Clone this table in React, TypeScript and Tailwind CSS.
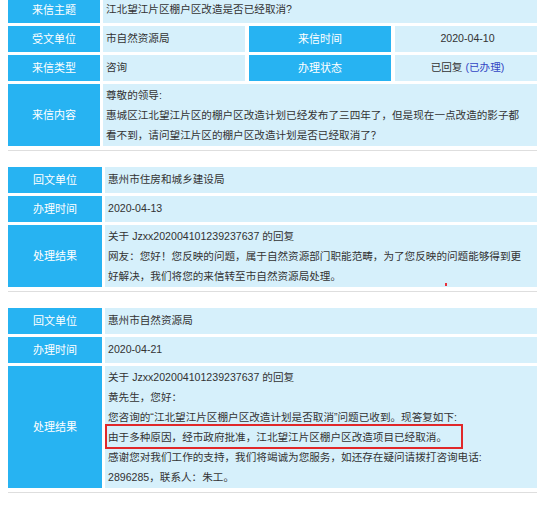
import type { ReactNode } from 'react';

function Label({ children, className = '' }: { children: ReactNode; className?: string }) {
    return (
        <div className={`flex shrink-0 items-center justify-center bg-[#27b3f2] text-[11px] text-white ${className}`}>
            {children}
        </div>
    );
}

function Cell({ children, className = '' }: { children: ReactNode; className?: string }) {
    return <div className={`bg-[#d6f0fb] pl-[3px] text-[#333] ${className}`}>{children}</div>;
}

function Line({ children }: { children: ReactNode }) {
    return <div className="h-[20px] whitespace-nowrap leading-[20px]">{children}</div>;
}

function ReplySection({
    unit,
    date,
    children,
}: {
    unit: string;
    date: string;
    children: ReactNode;
}) {
    return (
        <section className="mt-[16px] flex flex-col gap-[3px] border-b border-[#dedede] pb-[4px]">
            <div className="flex h-[26px]">
                <Label className="w-[94px]">回文单位</Label>
                <Cell className="ml-[3px] flex flex-1 items-center">{unit}</Cell>
            </div>
            <div className="flex h-[26px]">
                <Label className="w-[94px]">办理时间</Label>
                <Cell className="ml-[3px] flex flex-1 items-center">{date}</Cell>
            </div>
            <div className="flex">
                <Label className="w-[94px]">处理结果</Label>
                <Cell className="relative ml-[3px] flex-1 pt-px pb-px">{children}</Cell>
            </div>
        </section>
    );
}

export default function App() {
    return (
        <div className="min-h-[505px] w-[550px] overflow-hidden bg-white font-['Liberation_Sans','Noto_Sans_CJK_SC',sans-serif] text-[10.6px]">
            <div className="ml-[8px] w-[529px]">
                {/* 来信 */}
                <section className="-mt-[3px] flex flex-col gap-[3px] border-b border-[#dedede] pb-[4px]">
                    <div className="flex h-[26px]">
                        <Label className="w-[92px]">来信主题</Label>
                        <Cell className="ml-[3px] flex flex-1 items-center">江北望江片区棚户区改造是否已经取消?</Cell>
                    </div>
                    <div className="flex h-[26px]">
                        <Label className="w-[92px]">受文单位</Label>
                        <Cell className="ml-[3px] flex w-[142px] items-center">市自然资源局</Cell>
                        <Label className="ml-[4px] w-[142px]">来信时间</Label>
                        <Cell className="ml-[4px] flex flex-1 items-center justify-center pl-0">2020-04-10</Cell>
                    </div>
                    <div className="flex h-[26px]">
                        <Label className="w-[92px]">来信类型</Label>
                        <Cell className="ml-[3px] flex w-[142px] items-center">咨询</Cell>
                        <Label className="ml-[4px] w-[142px]">办理状态</Label>
                        <Cell className="ml-[4px] flex flex-1 items-center justify-center gap-[3px] pl-0">
                            <span>已回复</span>
                            <span className="text-[#3346c4]">(已办理)</span>
                        </Cell>
                    </div>
                    <div className="flex">
                        <Label className="w-[92px]">来信内容</Label>
                        <Cell className="ml-[3px] flex-1 py-px">
                            <Line>尊敬的领导:</Line>
                            <Line>惠城区江北望江片区的棚户区改造计划已经发布了三四年了，但是现在一点改造的影子都</Line>
                            <Line>看不到，请问望江片区的棚户区改造计划是否已经取消了？</Line>
                        </Cell>
                    </div>
                </section>

                <ReplySection unit="惠州市住房和城乡建设局" date="2020-04-13">
                    <Line>关于 Jzxx202004101239237637 的回复</Line>
                    <Line>网友：您好！您反映的问题，属于自然资源部门职能范畴，为了您反映的问题能够得到更</Line>
                    <Line>好解决，我们将您的来信转至市自然资源局处理。</Line>
                    <span className="absolute top-[58px] left-[340px] h-[3px] w-[2px] bg-[#e8303a]" />
                </ReplySection>

                <ReplySection unit="惠州市自然资源局" date="2020-04-21">
                    <Line>关于 Jzxx202004101239237637 的回复</Line>
                    <Line>黄先生，您好：</Line>
                    <Line>您咨询的“江北望江片区棚户区改造计划是否取消”问题已收到。现答复如下:</Line>
                    <div className="relative h-[20px] whitespace-nowrap leading-[20px]">
                        由于多种原因，经市政府批准，江北望江片区棚户区改造项目已经取消。
                        <span className="absolute -top-[3px] -left-[3px] h-[25px] w-[358px] border-2 border-[#e0282a]" />
                    </div>
                    <Line>感谢您对我们工作的支持，我们将竭诚为您服务，如还存在疑问请拨打咨询电话:</Line>
                    <Line>2896285，联系人：朱工。</Line>
                </ReplySection>
            </div>
        </div>
    );
}
